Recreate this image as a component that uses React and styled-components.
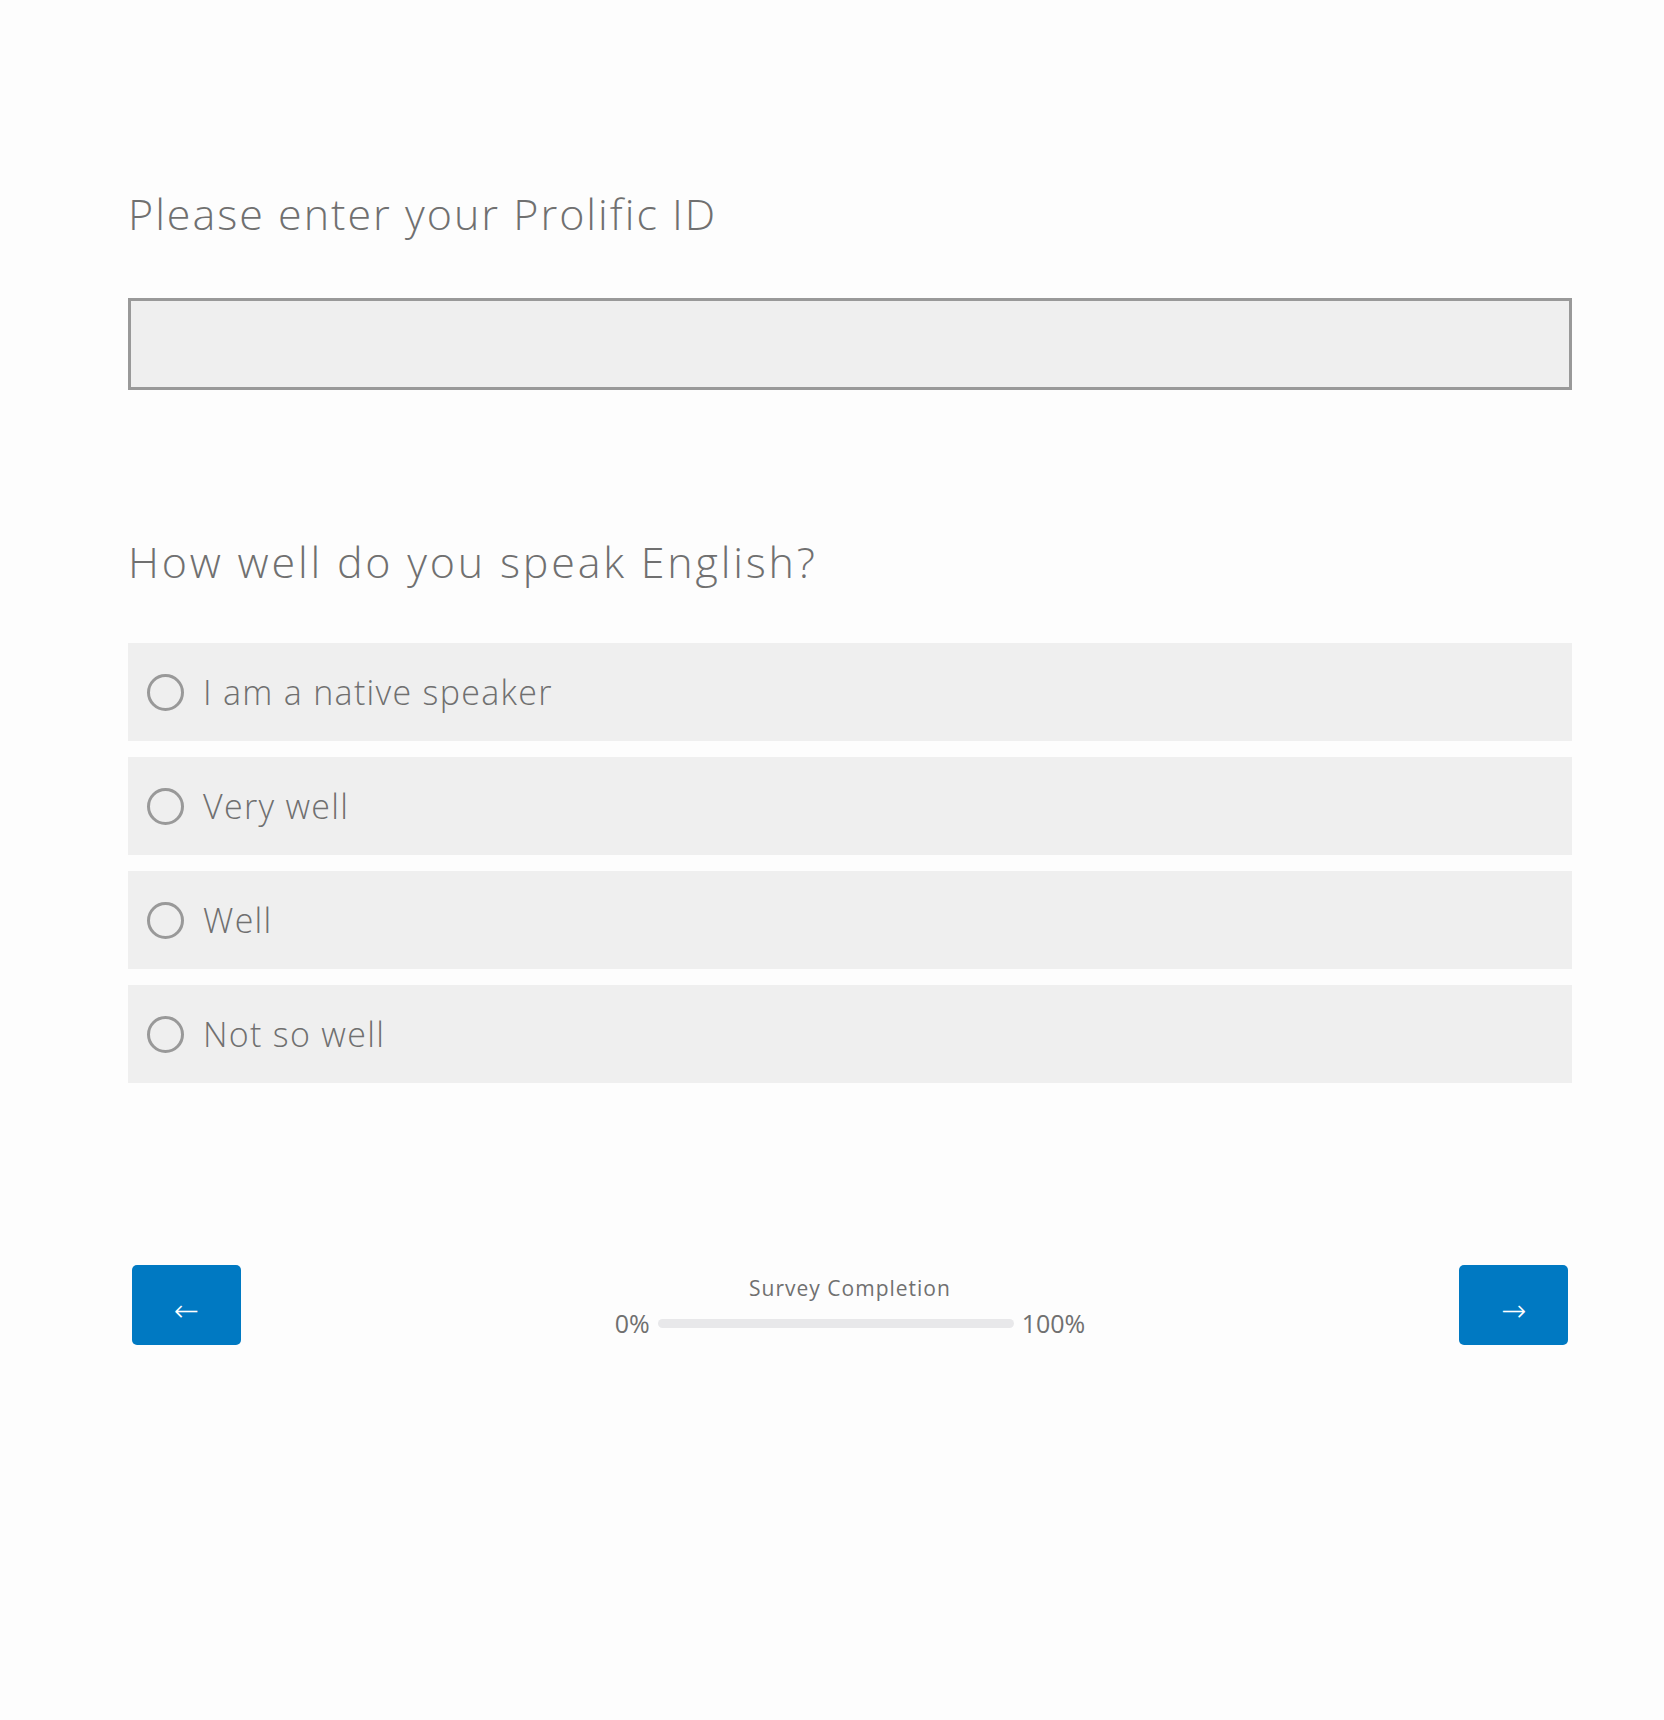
import React from 'react';
import styled, { createGlobalStyle } from 'styled-components';

const GlobalStyle = createGlobalStyle`
  html, body {
    margin: 0;
    padding: 0;
    background: #fdfdfd;
  }
  body {
    font-family: "Open Sans", "Liberation Sans", sans-serif;
    color: #707070;
  }
`;

const Page = styled.div`
  width: 1444px;
  padding: 184px 0 300px 128px;
`;

const QuestionTitle = styled.h2`
  margin: ${p => p.top || 0}px 0 0;
  font-size: 43px;
  line-height: 60px;
  font-weight: 300;
  letter-spacing: ${p => p.spacing || 2.4}px;
  color: #707070;
`;

const TextInput = styled.input`
  display: block;
  box-sizing: border-box;
  width: 100%;
  height: 92px;
  margin-top: 54px;
  border: 3px solid #999;
  background: #efefef;
  outline: none;
  font-family: inherit;
  font-size: 30px;
  padding: 0 20px;
`;

const OptionList = styled.div`
  display: flex;
  flex-direction: column;
  gap: 16px;
  margin-top: 51px;
`;

const Option = styled.label`
  display: flex;
  align-items: center;
  height: 98px;
  padding-left: 19px;
  background: #efefef;
  cursor: pointer;
`;

const Radio = styled.span`
  box-sizing: border-box;
  width: 37px;
  height: 37px;
  border: 3px solid #999;
  border-radius: 50%;
  flex-shrink: 0;
`;

const OptionText = styled.span`
  margin-left: 19px;
  font-size: 34px;
  line-height: 1;
  font-weight: 300;
  letter-spacing: 1.3px;
  color: #707070;
`;

const Footer = styled.div`
  display: flex;
  align-items: flex-start;
  margin-top: 182px;
  padding: 0 4px;
`;

const NavButton = styled.button`
  width: 109px;
  height: 80px;
  border: none;
  border-radius: 5px;
  background: #0079c2;
  color: #fff;
  font-family: "DejaVu Sans", sans-serif;
  font-size: 30px;
  font-weight: 300;
  padding: 10px 0 0;
  cursor: pointer;
`;

const Progress = styled.div`
  flex: 1;
  display: flex;
  flex-direction: column;
  align-items: center;
  padding-top: 11px;
`;

const ProgressLabel = styled.div`
  font-size: 21px;
  line-height: 1.2;
  letter-spacing: 1px;
  color: #707070;
`;

const ProgressRow = styled.div`
  display: flex;
  align-items: center;
  gap: 8px;
  margin-top: 7px;
`;

const ProgressValue = styled.span`
  font-size: 25px;
  line-height: 30px;
  color: #707070;
`;

const Bar = styled.div`
  width: 356px;
  height: 9px;
  border-radius: 5px;
  background: #e8e8ea;
`;

const options = ['I am a native speaker', 'Very well', 'Well', 'Not so well'];

export default function App() {
  return (
    <>
      <GlobalStyle />
      <Page>
        <QuestionTitle spacing={2}>Please enter your Prolific ID</QuestionTitle>
        <TextInput type="text" />
        <QuestionTitle top={142} spacing={2.8}>How well do you speak English?</QuestionTitle>
        <OptionList>
          {options.map(o => (
            <Option key={o}>
              <Radio />
              <OptionText>{o}</OptionText>
            </Option>
          ))}
        </OptionList>
        <Footer>
          <NavButton>←</NavButton>
          <Progress>
            <ProgressLabel>Survey Completion</ProgressLabel>
            <ProgressRow>
              <ProgressValue>0%</ProgressValue>
              <Bar />
              <ProgressValue>100%</ProgressValue>
            </ProgressRow>
          </Progress>
          <NavButton>→</NavButton>
        </Footer>
      </Page>
    </>
  );
}
